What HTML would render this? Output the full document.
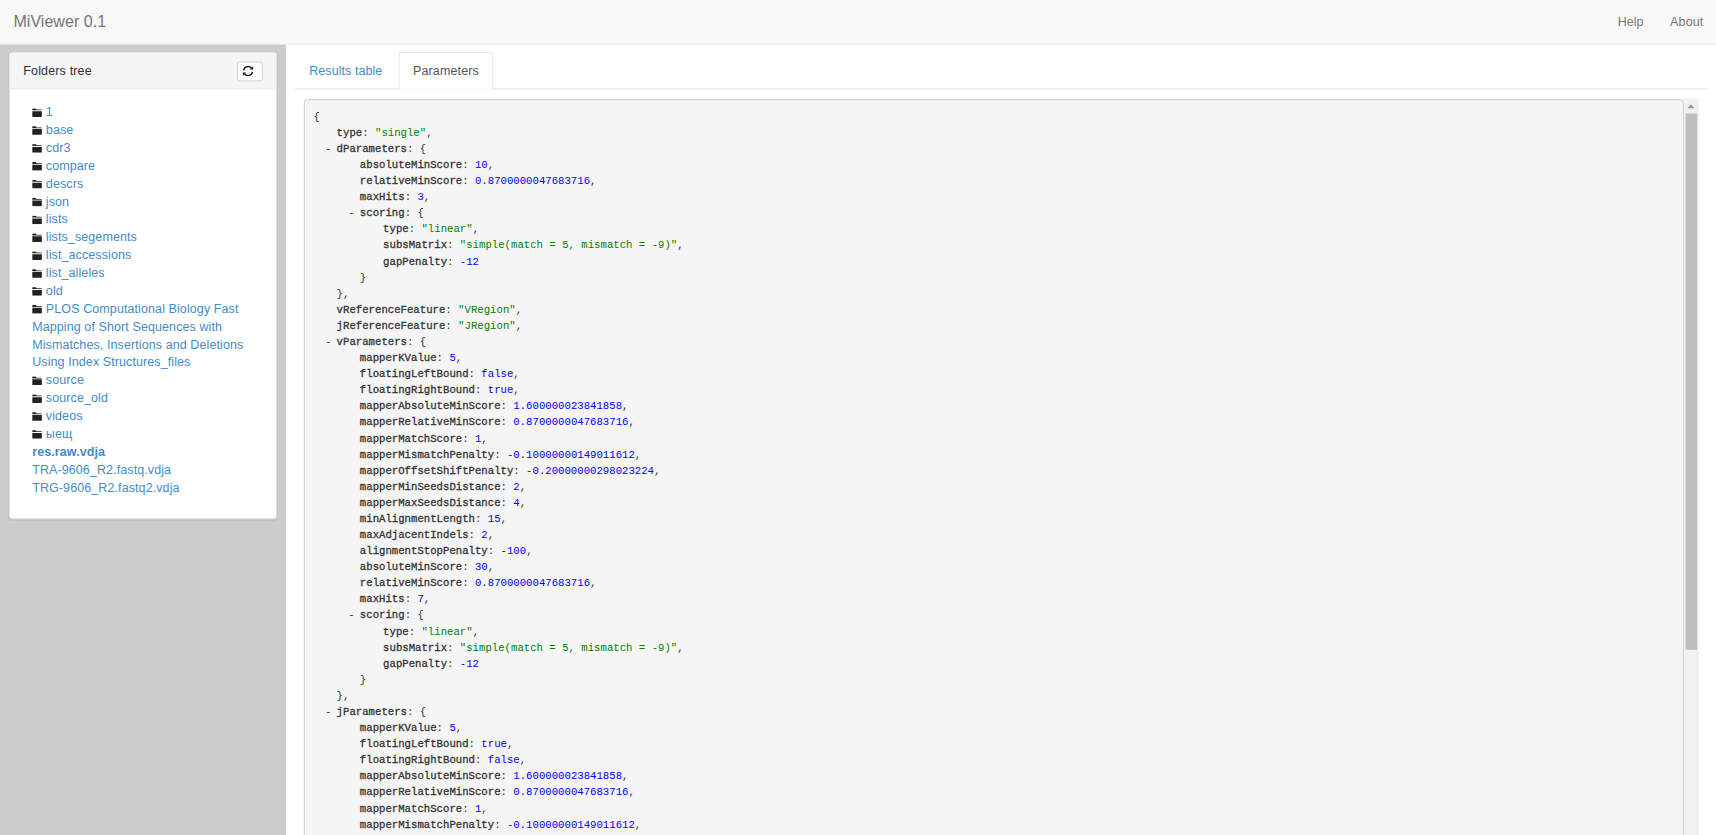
<!DOCTYPE html>
<html lang="en"><head><meta charset="utf-8"><title>MiViewer 0.1</title>
<style>
html,body{margin:0;padding:0;background:#fff;overflow:hidden}
body{width:1716px;height:835px;position:relative}
#w{position:absolute;left:0;top:0;width:1920px;height:935px;overflow:hidden;transform:scale(0.89375);transform-origin:0 0;font-family:"Liberation Sans",Arial,sans-serif;font-size:14px;line-height:20px;color:#333;background:#fff}
#nav{position:absolute;left:0;top:0;width:1920px;height:49px;background:#f8f8f8;border-bottom:1px solid #e7e7e7}
.brand{position:absolute;left:15px;top:13.8px;font-size:18px;line-height:20px;color:#777}
.nl{position:absolute;top:13.7px;color:#777;font-size:14px;line-height:20px}
#help{left:1810px}
#about{right:14px;letter-spacing:.15px}
#side{position:absolute;left:0;top:50px;width:320px;height:900px;background:#ccc}
.panel{position:absolute;left:10px;top:8.4px;width:298px;height:520.8px;background:#fff;border:1px solid #ddd;border-radius:4px;box-shadow:0 1px 1px rgba(0,0,0,.05)}
.ph{letter-spacing:.17px;height:20px;padding:10px 15px;background:#f5f5f5;border-bottom:1px solid #ddd;border-radius:3px 3px 0 0;position:relative}
.btn{position:absolute;right:15px;top:10px;width:26.6px;height:20px;border:1px solid #ccc;border-radius:3px;background:#fff}
.btn svg{position:absolute;left:4.1px;top:2.2px;width:13px;height:13px}
.pb{padding:15px 15px 15px 25px}
.pb ul{list-style:none;margin:0;padding:0}
.pb li{line-height:20px;letter-spacing:.1px}
.pb a{color:#428bca;text-decoration:none}
.pb a.b{font-weight:bold}
.fi{width:10.8px;height:9.8px;fill:#222;margin-right:4.5px;vertical-align:-0.5px}
#main{position:absolute;left:320px;top:50px;width:1600px;height:900px}
.tabs{position:absolute;left:10px;top:8.4px;width:1581px;height:41px;border-bottom:1px solid #ddd}
.tab{letter-spacing:.15px;white-space:nowrap;position:absolute;top:0;height:20px;padding:10px 15px;border:1px solid transparent;border-radius:4px 4px 0 0}
.t1{left:0;letter-spacing:.07px;color:#428bca}
.t2{left:116px;box-sizing:border-box;width:106.4px;height:42px;color:#555;background:#fff;border-color:#ddd #ddd #fff}
.pre{position:absolute;left:20.15px;top:60.5px;width:1522.7px;height:1100px;padding:10.6px 9.5px 9.5px;border:1.1px solid #c6c6c6;border-radius:4px;background:#f5f5f5;font-family:"Liberation Mono","DejaVu Sans Mono",monospace;font-size:11.93px;line-height:18px;color:#333;white-space:nowrap}
.l{position:relative;height:18px;white-space:pre}
.l1{margin-left:26px}.l2{margin-left:52px}.l3{margin-left:78px}
.c{position:absolute;left:-13px}
.p{font-weight:normal;-webkit-text-stroke:.33px #333}
.s{color:#008000}
.n{color:#0000ff}
.sb{position:absolute;left:1564px;top:60.4px;width:17px;height:900px;background:#f1f1f1}
.up{position:absolute;left:4.2px;top:7px;width:0;height:0;border-left:4px solid transparent;border-right:4px solid transparent;border-bottom:4.5px solid #959595}
.th{position:absolute;left:2px;top:17px;width:13px;height:600px;background:#bdbdbd}

</style></head><body>
<div id="w">
<div id="nav"><span class="brand">MiViewer 0.1</span><span class="nl" id="help">Help</span><span class="nl" id="about">About</span></div>
<div id="side">
<div class="panel">
<div class="ph"><span>Folders tree</span><span class="btn"><svg viewBox="0 0 12 12"><path d="M1.5 5.2A4.6 4.6 0 0 1 9.6 3.1M10.5 6.8A4.6 4.6 0 0 1 2.4 8.9" fill="none" stroke="#1a1a1a" stroke-width="1.45"/><path d="M11.3 1.1V4.5H7.9ZM.7 10.9V7.5H4.1Z" fill="#1a1a1a"/></svg></span></div>
<div class="pb"><ul>
<li><svg class="fi" viewBox="0 0 12 10" preserveAspectRatio="none"><path d="M0 1Q0 .4 .6 .4H4.2Q4.7 .4 4.9 .8L5.3 1.6H11.4Q12 1.6 12 2.2V2.5H0ZM0 3.5H12V9.3Q12 10 11.3 10H.7Q0 10 0 9.3Z"/></svg><a>1</a></li>
<li><svg class="fi" viewBox="0 0 12 10" preserveAspectRatio="none"><path d="M0 1Q0 .4 .6 .4H4.2Q4.7 .4 4.9 .8L5.3 1.6H11.4Q12 1.6 12 2.2V2.5H0ZM0 3.5H12V9.3Q12 10 11.3 10H.7Q0 10 0 9.3Z"/></svg><a>base</a></li>
<li><svg class="fi" viewBox="0 0 12 10" preserveAspectRatio="none"><path d="M0 1Q0 .4 .6 .4H4.2Q4.7 .4 4.9 .8L5.3 1.6H11.4Q12 1.6 12 2.2V2.5H0ZM0 3.5H12V9.3Q12 10 11.3 10H.7Q0 10 0 9.3Z"/></svg><a>cdr3</a></li>
<li><svg class="fi" viewBox="0 0 12 10" preserveAspectRatio="none"><path d="M0 1Q0 .4 .6 .4H4.2Q4.7 .4 4.9 .8L5.3 1.6H11.4Q12 1.6 12 2.2V2.5H0ZM0 3.5H12V9.3Q12 10 11.3 10H.7Q0 10 0 9.3Z"/></svg><a>compare</a></li>
<li><svg class="fi" viewBox="0 0 12 10" preserveAspectRatio="none"><path d="M0 1Q0 .4 .6 .4H4.2Q4.7 .4 4.9 .8L5.3 1.6H11.4Q12 1.6 12 2.2V2.5H0ZM0 3.5H12V9.3Q12 10 11.3 10H.7Q0 10 0 9.3Z"/></svg><a>descrs</a></li>
<li><svg class="fi" viewBox="0 0 12 10" preserveAspectRatio="none"><path d="M0 1Q0 .4 .6 .4H4.2Q4.7 .4 4.9 .8L5.3 1.6H11.4Q12 1.6 12 2.2V2.5H0ZM0 3.5H12V9.3Q12 10 11.3 10H.7Q0 10 0 9.3Z"/></svg><a>json</a></li>
<li><svg class="fi" viewBox="0 0 12 10" preserveAspectRatio="none"><path d="M0 1Q0 .4 .6 .4H4.2Q4.7 .4 4.9 .8L5.3 1.6H11.4Q12 1.6 12 2.2V2.5H0ZM0 3.5H12V9.3Q12 10 11.3 10H.7Q0 10 0 9.3Z"/></svg><a>lists</a></li>
<li><svg class="fi" viewBox="0 0 12 10" preserveAspectRatio="none"><path d="M0 1Q0 .4 .6 .4H4.2Q4.7 .4 4.9 .8L5.3 1.6H11.4Q12 1.6 12 2.2V2.5H0ZM0 3.5H12V9.3Q12 10 11.3 10H.7Q0 10 0 9.3Z"/></svg><a>lists_segements</a></li>
<li><svg class="fi" viewBox="0 0 12 10" preserveAspectRatio="none"><path d="M0 1Q0 .4 .6 .4H4.2Q4.7 .4 4.9 .8L5.3 1.6H11.4Q12 1.6 12 2.2V2.5H0ZM0 3.5H12V9.3Q12 10 11.3 10H.7Q0 10 0 9.3Z"/></svg><a>list_accessions</a></li>
<li><svg class="fi" viewBox="0 0 12 10" preserveAspectRatio="none"><path d="M0 1Q0 .4 .6 .4H4.2Q4.7 .4 4.9 .8L5.3 1.6H11.4Q12 1.6 12 2.2V2.5H0ZM0 3.5H12V9.3Q12 10 11.3 10H.7Q0 10 0 9.3Z"/></svg><a>list_alleles</a></li>
<li><svg class="fi" viewBox="0 0 12 10" preserveAspectRatio="none"><path d="M0 1Q0 .4 .6 .4H4.2Q4.7 .4 4.9 .8L5.3 1.6H11.4Q12 1.6 12 2.2V2.5H0ZM0 3.5H12V9.3Q12 10 11.3 10H.7Q0 10 0 9.3Z"/></svg><a>old</a></li>
<li><svg class="fi" viewBox="0 0 12 10" preserveAspectRatio="none"><path d="M0 1Q0 .4 .6 .4H4.2Q4.7 .4 4.9 .8L5.3 1.6H11.4Q12 1.6 12 2.2V2.5H0ZM0 3.5H12V9.3Q12 10 11.3 10H.7Q0 10 0 9.3Z"/></svg><a>PLOS Computational Biology Fast Mapping of Short Sequences with Mismatches, Insertions and Deletions Using Index Structures_files</a></li>
<li><svg class="fi" viewBox="0 0 12 10" preserveAspectRatio="none"><path d="M0 1Q0 .4 .6 .4H4.2Q4.7 .4 4.9 .8L5.3 1.6H11.4Q12 1.6 12 2.2V2.5H0ZM0 3.5H12V9.3Q12 10 11.3 10H.7Q0 10 0 9.3Z"/></svg><a>source</a></li>
<li><svg class="fi" viewBox="0 0 12 10" preserveAspectRatio="none"><path d="M0 1Q0 .4 .6 .4H4.2Q4.7 .4 4.9 .8L5.3 1.6H11.4Q12 1.6 12 2.2V2.5H0ZM0 3.5H12V9.3Q12 10 11.3 10H.7Q0 10 0 9.3Z"/></svg><a>source_old</a></li>
<li><svg class="fi" viewBox="0 0 12 10" preserveAspectRatio="none"><path d="M0 1Q0 .4 .6 .4H4.2Q4.7 .4 4.9 .8L5.3 1.6H11.4Q12 1.6 12 2.2V2.5H0ZM0 3.5H12V9.3Q12 10 11.3 10H.7Q0 10 0 9.3Z"/></svg><a>videos</a></li>
<li><svg class="fi" viewBox="0 0 12 10" preserveAspectRatio="none"><path d="M0 1Q0 .4 .6 .4H4.2Q4.7 .4 4.9 .8L5.3 1.6H11.4Q12 1.6 12 2.2V2.5H0ZM0 3.5H12V9.3Q12 10 11.3 10H.7Q0 10 0 9.3Z"/></svg><a>ыещ</a></li>
<li><a class="b">res.raw.vdja</a></li>
<li><a>TRA-9606_R2.fastq.vdja</a></li>
<li><a>TRG-9606_R2.fastq2.vdja</a></li>
</ul></div>
</div>
</div>
<div id="main">
<div class="tabs"><span class="tab t1">Results table</span><span class="tab t2">Parameters</span></div>
<div class="pre">
<div class="l l0">{</div><div class="l l1"><span class="p">type</span>: <span class="s">"single"</span>,</div><div class="l l1"><span class="c">-</span><span class="p">dParameters</span>: {</div><div class="l l2"><span class="p">absoluteMinScore</span>: <span class="n">10</span>,</div><div class="l l2"><span class="p">relativeMinScore</span>: <span class="n">0.8700000047683716</span>,</div><div class="l l2"><span class="p">maxHits</span>: <span class="n">3</span>,</div><div class="l l2"><span class="c">-</span><span class="p">scoring</span>: {</div><div class="l l3"><span class="p">type</span>: <span class="s">"linear"</span>,</div><div class="l l3"><span class="p">subsMatrix</span>: <span class="s">"simple(match = 5, mismatch = -9)"</span>,</div><div class="l l3"><span class="p">gapPenalty</span>: <span class="n">-12</span></div><div class="l l2">}</div><div class="l l1">},</div><div class="l l1"><span class="p">vReferenceFeature</span>: <span class="s">"VRegion"</span>,</div><div class="l l1"><span class="p">jReferenceFeature</span>: <span class="s">"JRegion"</span>,</div><div class="l l1"><span class="c">-</span><span class="p">vParameters</span>: {</div><div class="l l2"><span class="p">mapperKValue</span>: <span class="n">5</span>,</div><div class="l l2"><span class="p">floatingLeftBound</span>: <span class="n">false</span>,</div><div class="l l2"><span class="p">floatingRightBound</span>: <span class="n">true</span>,</div><div class="l l2"><span class="p">mapperAbsoluteMinScore</span>: <span class="n">1.600000023841858</span>,</div><div class="l l2"><span class="p">mapperRelativeMinScore</span>: <span class="n">0.8700000047683716</span>,</div><div class="l l2"><span class="p">mapperMatchScore</span>: <span class="n">1</span>,</div><div class="l l2"><span class="p">mapperMismatchPenalty</span>: <span class="n">-0.10000000149011612</span>,</div><div class="l l2"><span class="p">mapperOffsetShiftPenalty</span>: <span class="n">-0.20000000298023224</span>,</div><div class="l l2"><span class="p">mapperMinSeedsDistance</span>: <span class="n">2</span>,</div><div class="l l2"><span class="p">mapperMaxSeedsDistance</span>: <span class="n">4</span>,</div><div class="l l2"><span class="p">minAlignmentLength</span>: <span class="n">15</span>,</div><div class="l l2"><span class="p">maxAdjacentIndels</span>: <span class="n">2</span>,</div><div class="l l2"><span class="p">alignmentStopPenalty</span>: <span class="n">-100</span>,</div><div class="l l2"><span class="p">absoluteMinScore</span>: <span class="n">30</span>,</div><div class="l l2"><span class="p">relativeMinScore</span>: <span class="n">0.8700000047683716</span>,</div><div class="l l2"><span class="p">maxHits</span>: <span class="n">7</span>,</div><div class="l l2"><span class="c">-</span><span class="p">scoring</span>: {</div><div class="l l3"><span class="p">type</span>: <span class="s">"linear"</span>,</div><div class="l l3"><span class="p">subsMatrix</span>: <span class="s">"simple(match = 5, mismatch = -9)"</span>,</div><div class="l l3"><span class="p">gapPenalty</span>: <span class="n">-12</span></div><div class="l l2">}</div><div class="l l1">},</div><div class="l l1"><span class="c">-</span><span class="p">jParameters</span>: {</div><div class="l l2"><span class="p">mapperKValue</span>: <span class="n">5</span>,</div><div class="l l2"><span class="p">floatingLeftBound</span>: <span class="n">true</span>,</div><div class="l l2"><span class="p">floatingRightBound</span>: <span class="n">false</span>,</div><div class="l l2"><span class="p">mapperAbsoluteMinScore</span>: <span class="n">1.600000023841858</span>,</div><div class="l l2"><span class="p">mapperRelativeMinScore</span>: <span class="n">0.8700000047683716</span>,</div><div class="l l2"><span class="p">mapperMatchScore</span>: <span class="n">1</span>,</div><div class="l l2"><span class="p">mapperMismatchPenalty</span>: <span class="n">-0.10000000149011612</span>,</div><div class="l l2"><span class="p">mapperOffsetShiftPenalty</span>: <span class="n">-0.20000000298023224</span>,</div><div class="l l2"><span class="p">mapperMinSeedsDistance</span>: <span class="n">2</span>,</div><div class="l l2"><span class="p">mapperMaxSeedsDistance</span>: <span class="n">4</span>,</div><div class="l l2"><span class="p">minAlignmentLength</span>: <span class="n">15</span>,</div><div class="l l2"><span class="p">maxAdjacentIndels</span>: <span class="n">2</span>,</div><div class="l l2"><span class="p">alignmentStopPenalty</span>: <span class="n">-100</span>,</div><div class="l l2"><span class="p">absoluteMinScore</span>: <span class="n">30</span>,</div><div class="l l2"><span class="p">relativeMinScore</span>: <span class="n">0.8700000047683716</span>,</div><div class="l l2"><span class="p">maxHits</span>: <span class="n">7</span>,</div><div class="l l2"><span class="c">-</span><span class="p">scoring</span>: {</div><div class="l l3"><span class="p">type</span>: <span class="s">"linear"</span>,</div><div class="l l3"><span class="p">subsMatrix</span>: <span class="s">"simple(match = 5, mismatch = -9)"</span>,</div><div class="l l3"><span class="p">gapPenalty</span>: <span class="n">-12</span></div><div class="l l2">}</div><div class="l l1">}</div><div class="l l0">}</div>
</div>
<div class="sb"><div class="up"></div><div class="th"></div></div>
</div>
</div>
</body></html>
